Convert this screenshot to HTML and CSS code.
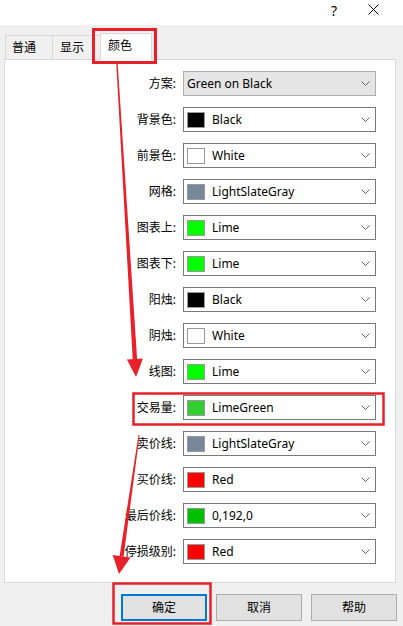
FILE: index.html
```html
<!DOCTYPE html>
<html lang="zh-CN">
<head>
<meta charset="utf-8">
<title>颜色</title>
<link rel="stylesheet" href="styles.css">
</head>
<body>
<div class="titlebar">
  <span class="help">?</span>
  <svg class="close" width="11" height="11" viewBox="0 0 11 11"><path d="M0.5 0.5 L10.5 10.5 M10.5 0.5 L0.5 10.5" stroke="#000" stroke-width="1" fill="none"/></svg>
</div>
<div class="tabs">
  <div class="tab tab-first">普通</div>
  <div class="tab tab-second">显示</div>
  <div class="tab tab-active">颜色</div>
</div>
<div class="panel">
  <div class="grid">
    <div class="label">方案:</div>
    <div class="combo readonly"><span class="text">Green on Black</span><svg class="chev" width="9" height="5" viewBox="0 0 9 5"><path d="M0.5 0.5 L4.5 4.5 L8.5 0.5" stroke="#606060" fill="none"/></svg></div>

    <div class="label">背景色:</div>
    <div class="combo"><span class="swatch" style="background:#000000"></span><span class="text">Black</span><svg class="chev" width="9" height="5" viewBox="0 0 9 5"><path d="M0.5 0.5 L4.5 4.5 L8.5 0.5" stroke="#606060" fill="none"/></svg></div>

    <div class="label">前景色:</div>
    <div class="combo"><span class="swatch" style="background:#ffffff"></span><span class="text">White</span><svg class="chev" width="9" height="5" viewBox="0 0 9 5"><path d="M0.5 0.5 L4.5 4.5 L8.5 0.5" stroke="#606060" fill="none"/></svg></div>

    <div class="label">网格:</div>
    <div class="combo"><span class="swatch" style="background:#778899"></span><span class="text">LightSlateGray</span><svg class="chev" width="9" height="5" viewBox="0 0 9 5"><path d="M0.5 0.5 L4.5 4.5 L8.5 0.5" stroke="#606060" fill="none"/></svg></div>

    <div class="label">图表上:</div>
    <div class="combo"><span class="swatch" style="background:#00ff00"></span><span class="text">Lime</span><svg class="chev" width="9" height="5" viewBox="0 0 9 5"><path d="M0.5 0.5 L4.5 4.5 L8.5 0.5" stroke="#606060" fill="none"/></svg></div>

    <div class="label">图表下:</div>
    <div class="combo"><span class="swatch" style="background:#00ff00"></span><span class="text">Lime</span><svg class="chev" width="9" height="5" viewBox="0 0 9 5"><path d="M0.5 0.5 L4.5 4.5 L8.5 0.5" stroke="#606060" fill="none"/></svg></div>

    <div class="label">阳烛:</div>
    <div class="combo"><span class="swatch" style="background:#000000"></span><span class="text">Black</span><svg class="chev" width="9" height="5" viewBox="0 0 9 5"><path d="M0.5 0.5 L4.5 4.5 L8.5 0.5" stroke="#606060" fill="none"/></svg></div>

    <div class="label">阴烛:</div>
    <div class="combo"><span class="swatch" style="background:#ffffff"></span><span class="text">White</span><svg class="chev" width="9" height="5" viewBox="0 0 9 5"><path d="M0.5 0.5 L4.5 4.5 L8.5 0.5" stroke="#606060" fill="none"/></svg></div>

    <div class="label">线图:</div>
    <div class="combo"><span class="swatch" style="background:#00ff00"></span><span class="text">Lime</span><svg class="chev" width="9" height="5" viewBox="0 0 9 5"><path d="M0.5 0.5 L4.5 4.5 L8.5 0.5" stroke="#606060" fill="none"/></svg></div>

    <div class="label">交易量:</div>
    <div class="combo"><span class="swatch" style="background:#32cd32"></span><span class="text">LimeGreen</span><svg class="chev" width="9" height="5" viewBox="0 0 9 5"><path d="M0.5 0.5 L4.5 4.5 L8.5 0.5" stroke="#606060" fill="none"/></svg></div>

    <div class="label">卖价线:</div>
    <div class="combo"><span class="swatch" style="background:#778899"></span><span class="text">LightSlateGray</span><svg class="chev" width="9" height="5" viewBox="0 0 9 5"><path d="M0.5 0.5 L4.5 4.5 L8.5 0.5" stroke="#606060" fill="none"/></svg></div>

    <div class="label">买价线:</div>
    <div class="combo"><span class="swatch" style="background:#ff0000"></span><span class="text">Red</span><svg class="chev" width="9" height="5" viewBox="0 0 9 5"><path d="M0.5 0.5 L4.5 4.5 L8.5 0.5" stroke="#606060" fill="none"/></svg></div>

    <div class="label">最后价线:</div>
    <div class="combo"><span class="swatch" style="background:#00c000"></span><span class="text">0,192,0</span><svg class="chev" width="9" height="5" viewBox="0 0 9 5"><path d="M0.5 0.5 L4.5 4.5 L8.5 0.5" stroke="#606060" fill="none"/></svg></div>

    <div class="label">停损级别:</div>
    <div class="combo"><span class="swatch" style="background:#ff0000"></span><span class="text">Red</span><svg class="chev" width="9" height="5" viewBox="0 0 9 5"><path d="M0.5 0.5 L4.5 4.5 L8.5 0.5" stroke="#606060" fill="none"/></svg></div>
  </div>
</div>
<div class="buttons">
  <div class="btn btn-default">确定</div>
  <div class="btn">取消</div>
  <div class="btn">帮助</div>
</div>
<svg class="annotations" width="403" height="626" viewBox="0 0 403 626">
  <g fill="none" stroke="#e8202a">
    <rect x="93.5" y="29.5" width="62" height="33" stroke-width="3"/>
    <rect x="133.5" y="393.5" width="250" height="31" stroke-width="2.5"/>
    <rect x="113.5" y="583.5" width="97" height="40" stroke-width="2.5"/>
  </g>
  <g fill="#e8202a">
    <polygon points="116.3,64 117.7,64 137.1,359 132.7,359"/>
    <polygon points="126.9,359.5 142.9,358.5 136,377"/>
    <polygon points="138.5,435 139.6,435 123.6,556.5 119.6,556"/>
    <polygon points="112.7,555 130.5,557.5 119,574"/>
  </g>
</svg>
</body>
</html>
```
FILE: styles.css
```css
html, body {
  margin: 0;
  padding: 0;
}

body {
  width: 403px;
  height: 626px;
  background: #f0f0f0;
  font-family: "Noto Sans", "Noto Sans CJK SC", sans-serif;
  font-size: 12px;
  color: #000;
  position: relative;
  overflow: hidden;
}

.titlebar {
  height: 25px;
  background: #ffffff;
  display: flex;
  justify-content: flex-end;
  align-items: center;
  gap: 31px;
  padding-right: 24px;
}

.help {
  font-size: 14px;
  line-height: 1;
  margin-top: -4px;
}

.close {
  display: block;
  margin-top: -6px;
}

.tabs {
  display: flex;
  align-items: flex-end;
  height: 26px;
  margin-top: 8px;
  padding-left: 5px;
}

.tab {
  box-sizing: border-box;
  height: 24px;
  border: 1px solid #d9d9d9;
  border-bottom: none;
  background: #f0f0f0;
  display: flex;
  align-items: center;
  padding-left: 6px;
  line-height: 1;
}

.tab-first {
  width: 48px;
}

.tab-second {
  width: 48px;
  margin-left: -1px;
  border-right: none;
  padding-left: 7px;
}

.tab-active {
  width: 52px;
  height: 27px;
  margin-bottom: -1px;
  background: #ffffff;
  padding-left: 7px;
  padding-bottom: 3px;
  position: relative;
  z-index: 1;
}

.panel {
  box-sizing: border-box;
  height: 524px;
  margin: 0 7px 0 4px;
  border: 1px solid #d9d9d9;
  background: #ffffff;
  padding: 11px 19px 0 0;
}

.grid {
  display: grid;
  grid-template-columns: 1fr 193px;
  grid-auto-rows: 25px;
  column-gap: 7px;
  row-gap: 11px;
  align-items: center;
}

.label {
  text-align: right;
  white-space: nowrap;
  line-height: 1;
}

.combo {
  box-sizing: border-box;
  height: 25px;
  border: 1px solid #7a7a7a;
  background: #ffffff;
  display: flex;
  align-items: center;
  padding: 0 5px 0 3px;
}

.combo.readonly {
  background: #e5e5e5;
  border-color: #adadad;
}

.swatch {
  flex: none;
  box-sizing: border-box;
  width: 18px;
  height: 16px;
  border: 1px solid #999999;
  margin-right: 7px;
}

.text {
  white-space: nowrap;
  line-height: 1;
}

.chev {
  display: block;
  margin-left: auto;
  flex: none;
}

.buttons {
  display: flex;
  justify-content: flex-end;
  gap: 9px;
  padding-right: 6px;
  margin-top: 11px;
}

.btn {
  box-sizing: border-box;
  width: 86px;
  height: 27px;
  border: 1px solid #adadad;
  background: #e1e1e1;
  display: flex;
  align-items: center;
  justify-content: center;
  line-height: 1;
}

.btn-default {
  border: 2px solid #0078d7;
}

.annotations {
  position: absolute;
  top: 0;
  left: 0;
  pointer-events: none;
}
```
